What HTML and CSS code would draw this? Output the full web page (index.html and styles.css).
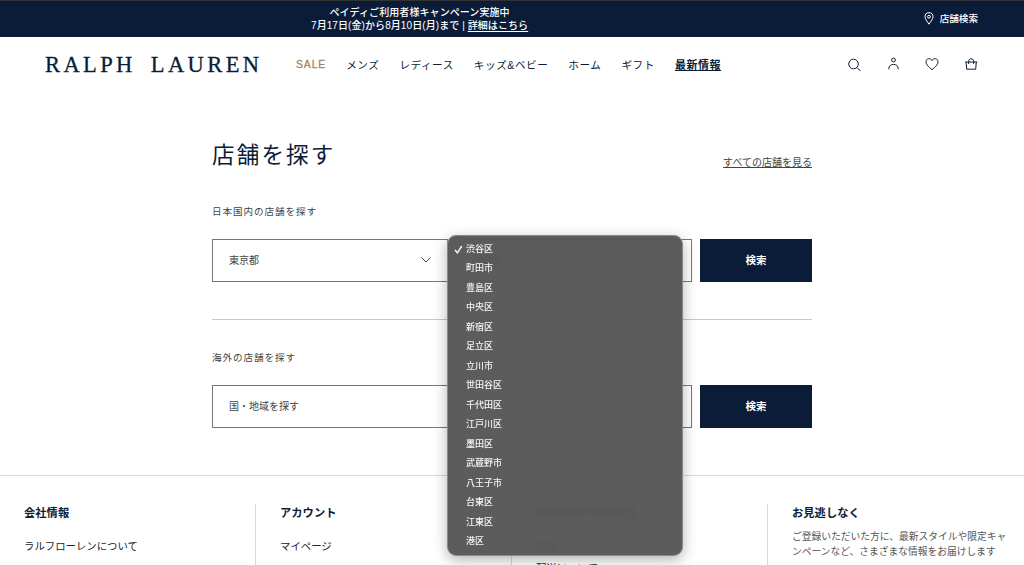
FILE: index.html
```html
<!DOCTYPE html>
<html lang="ja">
<head>
  <meta charset="utf-8">
  <title>店舗を探す | RALPH LAUREN</title>
  <link rel="stylesheet" href="styles.css">
</head>
<body>
  <div class="top-bar">
    <p class="campaign">ペイディご利用者様キャンペーン実施中<br>7月17日(金)から8月10日(月)まで | <a href="#">詳細はこちら</a></p>
    <a class="store-link" href="#">
      <svg width="10" height="13" viewBox="0 0 10 13"><path d="M5 12.2C3.2 9.4 1 7 1 4.7a4 4 0 0 1 8 0C9 7 6.8 9.4 5 12.2z"/><circle cx="5" cy="4.7" r="1.4"/></svg>
      <span>店舗検索</span>
    </a>
  </div>

  <header class="header">
    <a class="logo" href="#">RALPH LAUREN</a>
    <nav class="nav">
      <a class="sale" href="#">SALE</a>
      <a href="#">メンズ</a>
      <a href="#">レディース</a>
      <a href="#">キッズ&amp;ベビー</a>
      <a href="#">ホーム</a>
      <a href="#">ギフト</a>
      <a class="current" href="#">最新情報</a>
    </nav>
    <div class="icons">
      <svg width="14" height="14" viewBox="0 0 14 14"><circle cx="6.5" cy="7" r="4.8"/><path d="M10 10.500L13.500 14"/></svg>
      <svg width="14" height="14" viewBox="0 0 14 14"><circle cx="7.500" cy="3" r="1.900"/><path d="M2.800 12.400V11.800C2.800 9 4.800 7.400 7.500 7.400s4.700 1.600 4.700 4.400v.6"/></svg>
      <svg width="14" height="14" viewBox="0 0 14 14"><path d="M7 12.700C4 10.200 1 7.600 1 4.800 1 1.300 5.500.5 7 3.600 8.500.5 13 1.300 13 4.800c0 2.800-3 5.400-6 7.900z"/></svg>
      <svg width="14" height="14" viewBox="0 0 14 14"><path d="M1.200 5h12M2.100 5l.6 7.200h9L12.300 5M4.700 7V4.200C4.700 1 9.700 1 9.700 4.200V7"/></svg>
    </div>
  </header>

  <main class="store-finder">
    <div class="title-row">
      <h1>店舗を探す</h1>
      <a href="#">すべての店舗を見る</a>
    </div>

    <section class="search">
      <h2>日本国内の店舗を探す</h2>
      <div class="search-row">
        <div class="select">
          <span>東京都</span>
          <svg width="12" height="8" viewBox="0 0 12 8"><path d="M1.500 1.500L6 6l4.500-4.500"/></svg>
        </div>
        <div class="select">
          <span>渋谷区</span>
          <svg width="12" height="8" viewBox="0 0 12 8"><path d="M1.500 1.500L6 6l4.500-4.500"/></svg>
          <ul class="options">
            <li class="checked"><svg width="9" height="9" viewBox="0 0 9 9"><path d="M1 5l2.400 2.800L7.800 1"/></svg>渋谷区</li>
            <li>町田市</li>
            <li>豊島区</li>
            <li>中央区</li>
            <li>新宿区</li>
            <li>足立区</li>
            <li>立川市</li>
            <li>世田谷区</li>
            <li>千代田区</li>
            <li>江戸川区</li>
            <li>墨田区</li>
            <li>武蔵野市</li>
            <li>八王子市</li>
            <li>台東区</li>
            <li>江東区</li>
            <li>港区</li>
          </ul>
        </div>
        <button type="button">検索</button>
      </div>
    </section>

    <section class="search overseas">
      <h2>海外の店舗を探す</h2>
      <div class="search-row">
        <div class="select">
          <span>国・地域を探す</span>
          <svg width="12" height="8" viewBox="0 0 12 8"><path d="M1.500 1.500L6 6l4.500-4.500"/></svg>
        </div>
        <button type="button">検索</button>
      </div>
    </section>
  </main>

  <footer class="footer">
    <div class="footer-col">
      <h3>会社情報</h3>
      <a href="#">ラルフローレンについて</a>
    </div>
    <div class="footer-col">
      <h3>アカウント</h3>
      <a href="#">マイページ</a>
    </div>
    <div class="footer-col">
      <h3>カスタマーサービス</h3>
      <a href="#">FAQ</a>
      <a href="#">配送について</a>
    </div>
    <div class="footer-col">
      <h3>お見逃しなく</h3>
      <p>ご登録いただいた方に、最新スタイルや限定キャンペーンなど、さまざまな情報をお届けします</p>
    </div>
  </footer>
</body>
</html>
```

FILE: styles.css
```css
* {
  box-sizing: border-box;
}
body {
  margin: 0;
  height: 565px;
  overflow: hidden;
  font-family: "Liberation Sans", "Noto Sans CJK JP", sans-serif;
  font-size: 10px;
  color: #444;
  background-color: #fff;
}
h1, h2, h3, p, ul {
  margin: 0;
  padding: 0;
}
a {
  color: inherit;
  text-decoration: none;
}
svg {
  display: block;
  flex: none;
  fill: none;
  stroke: currentColor;
}

/* top bar */
.top-bar {
  display: flex;
  align-items: center;
  justify-content: space-between;
  height: 37px;
  padding: 0 46px 1px 311px;
  border-top: 1px solid #333;
  background-color: #0b1c38;
  color: #fff;
}
.campaign {
  padding-top: 1px;
  font-size: 10px;
  font-weight: 500;
  letter-spacing: 0.08px;
  line-height: 13px;
  text-align: center;
}
.campaign a {
  text-decoration: underline;
  text-underline-offset: 2px;
}
.store-link {
  display: flex;
  align-items: center;
  gap: 6px;
  padding-bottom: 1px;
  font-size: 9.6px;
  font-weight: 500;
}

/* header */
.header {
  display: flex;
  align-items: center;
  height: 55px;
  padding: 0 46px 0 45px;
  color: #0b1c38;
}
.logo {
  width: 251px;
  font-family: "Liberation Serif", serif;
  font-size: 22.5px;
  letter-spacing: 3.4px;
  word-spacing: 6px;
  white-space: nowrap;
  -webkit-text-stroke: 0.3px #0b1c38;
}
.nav {
  display: flex;
  flex: 1;
  gap: 20px;
  font-size: 10.6px;
  letter-spacing: 0.55px;
  line-height: 16px;
  white-space: nowrap;
}
.sale {
  font-size: 10.4px;
  letter-spacing: 0.9px;
  color: #a8845c;
  -webkit-text-stroke: 0.3px #a8845c;
}
.current {
  font-size: 11px;
  font-weight: bold;
  text-decoration: underline;
}
.icons {
  display: flex;
  gap: 25px;
  padding-bottom: 2px;
}
.icons svg {
  overflow: visible;
}

/* store finder */
.store-finder {
  width: 600px;
  margin: 0 auto;
  padding-top: 48px;
}
.title-row {
  display: flex;
  align-items: center;
  justify-content: space-between;
  height: 32px;
}
.title-row h1 {
  font-size: 22.5px;
  font-weight: normal;
  letter-spacing: 2.2px;
  line-height: 32px;
  color: #0b1c38;
}
.title-row a {
  padding-top: 10px;
  text-decoration: underline;
}
.search {
  height: 148px;
  padding-top: 32px;
  border-bottom: 1px solid #c8c8c8;
}
.search h2 {
  font-size: 9.6px;
  font-weight: normal;
  letter-spacing: 0.9px;
  line-height: 16px;
  margin-bottom: 19px;
}
.search-row {
  display: flex;
  gap: 8px;
}
.select {
  position: relative;
  display: flex;
  flex: 1;
  align-items: center;
  justify-content: space-between;
  height: 43px;
  padding: 0 15px 2px 16px;
  border: 1px solid #777;
}
.search button {
  width: 112px;
  height: 43px;
  padding: 0 0 2px;
  border: none;
  background-color: #0b1c38;
  color: #fff;
  font: bold 10.5px "Liberation Sans", "Noto Sans CJK JP", sans-serif;
}
.overseas {
  height: 155px;
  padding-top: 30px;
  border-bottom: none;
}

/* open list of wards */
.options {
  position: absolute;
  z-index: 1;
  top: -5px;
  left: -10px;
  width: 236px;
  height: 321px;
  padding: 3.5px 0;
  border: 1px solid #8a8a8a;
  border-radius: 9px;
  background-color: rgba(78, 78, 78, 0.92);
  backdrop-filter: blur(4px);
  box-shadow: 0 4px 14px rgba(0, 0, 0, 0.3);
  color: #f4f4f4;
  font-size: 9px;
  font-weight: 500;
  line-height: 19.5px;
  list-style: none;
}
.options li {
  display: flex;
  align-items: center;
  padding-left: 18px;
}
.options .checked {
  gap: 3px;
  padding-left: 6px;
}
.options svg {
  stroke-width: 1.5;
}

/* footer */
.footer {
  display: grid;
  grid-template-columns: repeat(4, 256px);
  padding-top: 28px;
  border-top: 1px solid #d8d8d8;
}
.footer-col {
  height: 61px;
  padding: 1px 14px 0 24px;
  border-right: 1px solid #d8d8d8;
}
.footer-col:last-child {
  border-right: none;
}
.footer-col h3 {
  margin-bottom: 17px;
  font-size: 11.3px;
  line-height: 17px;
  color: #0b1c38;
}
.footer-col a {
  display: block;
  margin-bottom: 6px;
  font-size: 10.4px;
  line-height: 16px;
  color: #222;
}
.footer-col p {
  margin-top: -9px;
  font-size: 9.75px;
  line-height: 14.5px;
  color: #555;
}
```
